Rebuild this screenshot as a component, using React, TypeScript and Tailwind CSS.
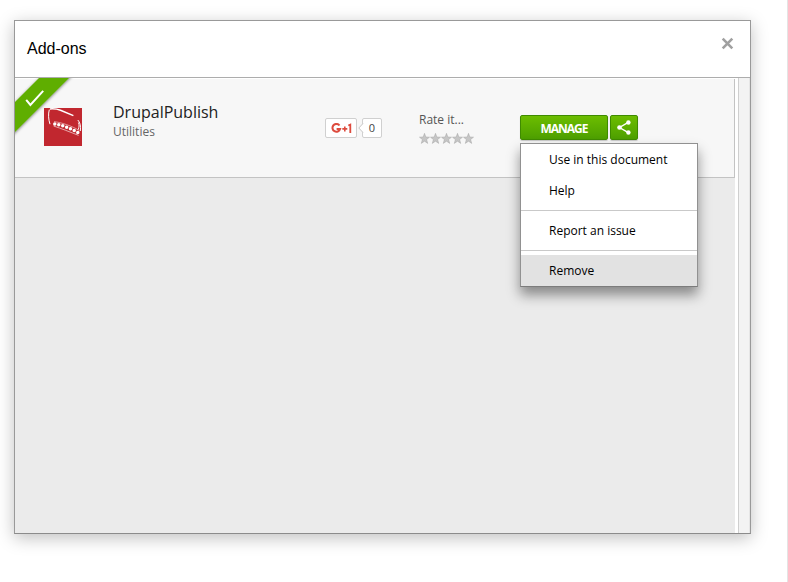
import React from "react";

const OPEN_SANS = "font-['Open_Sans','Noto_Sans',sans-serif]";

function Ribbon() {
  return (
    <svg className="absolute -top-px left-0" width="62" height="62" viewBox="0 0 62 62">
      <defs>
        <filter id="ribbonShadow" x="-20%" y="-20%" width="140%" height="140%">
          <feDropShadow dx="0" dy="1" stdDeviation="1.5" floodColor="#000" floodOpacity="0.5" />
        </filter>
      </defs>
      <path d="M-12 36 L36 -12 L66 -12 L-12 66 Z" fill="#5fae00" filter="url(#ribbonShadow)" />
      <path d="M11.2 21.8 L15.4 27 L28.2 12.8" fill="none" stroke="#fff" strokeWidth="2" />
    </svg>
  );
}

function AddonLogo() {
  return (
    <svg width="38" height="38" viewBox="0 0 38 38" fill="none" stroke="#fff" className="block">
      <rect width="38" height="38" fill="#c1272f" stroke="none" />
      <path d="M5.3 1.6 C4.1 6 4.4 11.5 6 16.2" strokeWidth="1" />
      <path d="M6 0.9 C10 0.6 13 0.9 16.5 2.3 L29.4 7.6" strokeWidth="1.5" />
      <path d="M33.8 12 C36.2 14.4 36.9 18 36.3 23" strokeWidth="1" />
      <path d="M34.4 14.5 C35.4 17 35.2 19 34.2 21.6" strokeWidth="0.9" />
      <path d="M10 13.6 C17 14.4 28 17.8 35.4 22.6" strokeWidth="0.5" />
      <path d="M10.8 16 C18 17 27 20.4 34.4 24.8" strokeWidth="3.5" strokeDasharray="0 4.1" strokeLinecap="round" />
      <path d="M9.6 18 C17 20.4 26 24 34.6 27.4" strokeWidth="0.6" />
    </svg>
  );
}

function PlusOne() {
  return (
    <div className="flex items-center">
      <div className="flex h-5 w-8 items-center justify-center rounded-[2px] border border-[#d0d0d0] bg-white">
        <svg width="21" height="11" viewBox="0 0 21 11" fill="none" stroke="#dd4b3e">
          <path d="M8.5 2.5 A3.9 3.9 0 1 0 9.1 6 H5.6" strokeWidth="2" />
          <path d="M11.3 5.9 H16.3 M13.8 3.4 V8.4" strokeWidth="1.6" />
          <path d="M17.3 2.5 L19.3 1.6 V10" strokeWidth="1.8" />
        </svg>
      </div>
      <div className="relative ml-[5px] flex h-5 w-5 items-center justify-center rounded-[2px] border border-[#d0d0d0] bg-white text-[11px] text-[#444]">
        <svg className="absolute -left-[5px] top-[4px]" width="6" height="10" viewBox="0 0 6 10">
          <path d="M6 0.5 H5 L0.8 5 L5 9.5 H6 Z" fill="#fff" />
          <path d="M5 0.5 L0.8 5 L5 9.5" fill="none" stroke="#c6c6c6" />
        </svg>
        0
      </div>
    </div>
  );
}

function Star() {
  return (
    <svg width="11" height="11" viewBox="0 0 11 11">
      <path
        d="M5.5 0.3 L6.8 4 L10.5 4.2 L7.6 6.5 L8.7 10.4 L5.5 8.2 L2.3 10.4 L3.4 6.5 L0.5 4.2 L4.2 4 Z"
        fill="#c6c6c6"
        stroke="#a6a6a6"
        strokeWidth="0.5"
      />
    </svg>
  );
}

function MenuItem({ label, active }: { label: string; active?: boolean }) {
  return (
    <div className={`flex h-[31px] items-center pl-7 text-[12px] text-black ${active ? "bg-[#e2e2e2]" : ""}`}>
      {label}
    </div>
  );
}

function ManageMenu() {
  return (
    <div className="absolute left-0 top-[28px] z-10 w-[178px] border border-[#919191] border-b-[#7c7c7c] bg-white shadow-[0_8px_12px_rgba(0,0,0,0.42)]">
      <MenuItem label="Use in this document" />
      <MenuItem label="Help" />
      <div className="my-1 h-px bg-[#c9c9c9]" />
      <MenuItem label="Report an issue" />
      <div className="my-1 h-px bg-[#c9c9c9]" />
      <MenuItem label="Remove" active />
    </div>
  );
}

function AddonCard() {
  return (
    <div className="bg-white pt-px">
      <div className="relative flex h-[99px] border-b border-r border-[#c3c3c3] bg-[#f7f7f7]">
        <Ribbon />
        <div className="relative ml-[29px] mt-[29px] h-[38px] w-[38px] shrink-0">
          <AddonLogo />
        </div>
        <div className="ml-[31px] mt-[22px] w-[212px] shrink-0">
          <div className="text-[16px] leading-[22px] text-[#222]">DrupalPublish</div>
          <div className="text-[12px] leading-[17px] text-[#666]">Utilities</div>
        </div>
        <div className="mt-[39px] w-[94px] shrink-0">
          <PlusOne />
        </div>
        <div className="mt-[32px] w-[101px] shrink-0">
          <div className="text-[12px] leading-[17px] text-[#555]">Rate it...</div>
          <div className="mt-[5px] flex">
            <Star />
            <Star />
            <Star />
            <Star />
            <Star />
          </div>
        </div>
        <div className="relative mt-[36px] flex h-[25px] shrink-0 gap-[2px]">
          <button className="flex h-[25px] w-[88px] items-center justify-center rounded-[2px] border border-[#3f8b00] bg-linear-to-b from-[#6cbd00] to-[#4d9f00] pt-[2px] text-[12px] font-bold tracking-[-1px] text-white shadow-[0_1px_1px_rgba(0,0,0,0.2)]">
            MANAGE
          </button>
          <button
            aria-label="Share"
            className="flex h-[25px] w-[28px] items-center justify-center rounded-[2px] border border-[#3f8b00] bg-linear-to-b from-[#6cbd00] to-[#4d9f00] shadow-[0_1px_1px_rgba(0,0,0,0.2)]"
          >
            <svg width="14" height="15" viewBox="0 0 14 15" fill="#fff" stroke="#fff">
              <path d="M11.3 2.4 L2.5 7.5 L11.3 12.6" fill="none" strokeWidth="1.4" />
              <circle cx="11.4" cy="2.5" r="2.2" stroke="none" />
              <circle cx="2.5" cy="7.5" r="2.3" stroke="none" />
              <circle cx="11.4" cy="12.5" r="2.2" stroke="none" />
            </svg>
          </button>
          <ManageMenu />
        </div>
      </div>
    </div>
  );
}

export default function App() {
  return (
    <div className={`h-[582px] w-[788px] overflow-hidden border-r border-[#e4e4e4] bg-white pl-[14px] pt-5 ${OPEN_SANS}`}>
      <div className="flex h-[514px] w-[737px] flex-col border border-[#999] border-b-[#8b8b8b] bg-white shadow-[0_4px_16px_rgba(0,0,0,0.25)]">
        <header className="flex h-[57px] shrink-0 items-center justify-between border-b border-[#adadad] pl-3 pr-4">
          <h1 className="font-['Liberation_Sans',Arial,sans-serif] text-[16px] leading-5 text-black">Add-ons</h1>
          <svg className="-mt-[11px]" width="13" height="13" viewBox="0 0 13 13" stroke="#a0a0a0" strokeWidth="2.6">
            <path d="M1.7 1.7 L11.3 11.3 M11.3 1.7 L1.7 11.3" />
          </svg>
        </header>
        <div className="flex min-h-0 flex-1">
          <main className="w-[720px] bg-[#ebebeb]">
            <AddonCard />
          </main>
          <div className="w-[3px] bg-white" />
          <div className="flex-1 border-l border-r border-l-[#cfcfcf] border-r-[#e6e6e6] bg-[#f3f3f3]" />
        </div>
      </div>
    </div>
  );
}
